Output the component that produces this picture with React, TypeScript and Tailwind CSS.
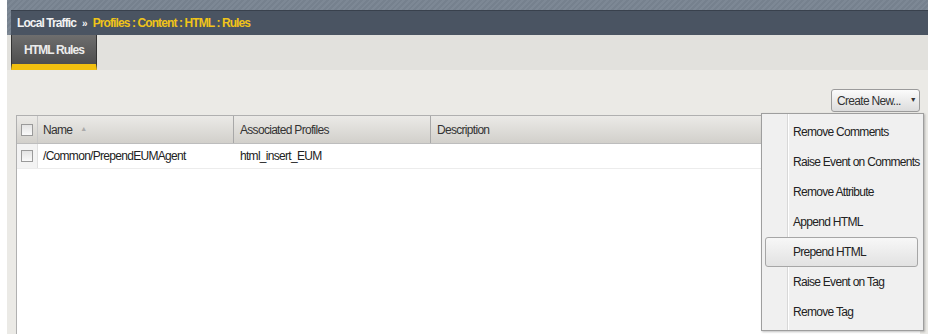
import React from "react";

const items = [
  "Remove Comments",
  "Raise Event on Comments",
  "Remove Attribute",
  "Append HTML",
  "Prepend HTML",
  "Raise Event on Tag",
  "Remove Tag",
];

function Check() {
  return <div className="w-[12px] h-[12px] border border-[#9a9a9a] bg-gradient-to-b from-[#e4e4e4] to-[#fafafa]" />;
}

export default function App() {
  return (
    <div
      className="relative w-[928px] h-[334px] overflow-hidden bg-white text-[12px] tracking-[-0.7px] text-[#222] whitespace-nowrap"
      style={{ fontFamily: '"Liberation Sans", Arial, sans-serif' }}
    >
      <div className="ml-[7px] flex flex-col h-full">
        <div className="bg-[repeating-linear-gradient(135deg,#7d8895_0px,#7d8895_2px,#76818e_2px,#76818e_4px)] pt-[10px] pl-[4px]">
          <div className="h-[25px] bg-[#4a5462] border-t border-[#39414d] flex items-center pl-[6px] font-bold tracking-[-0.9px]">
            <span className="text-[#f2f2f2]">Local Traffic</span>
            <span className="text-[#f2f2f2] mx-[6px] text-[10px]">»</span>
            <span className="text-[#f0c419]">Profiles : Content : HTML : Rules</span>
          </div>
        </div>
        <div className="h-[35px] bg-[#e2e1dd] pl-[4px] flex">
          <div className="w-[86px] h-full bg-gradient-to-b from-[#6e6e6e] to-[#4e4e4e] border-x border-[#333] border-b-[6px] border-b-[#f2c00f] flex items-start justify-center pt-[6px] text-[#ececec] font-bold tracking-[-0.9px]">
            HTML Rules
          </div>
        </div>
        <div className="flex-1 bg-[#ebeae6] pl-[9px] pr-[8px] pt-[19px] flex flex-col">
          <div className="flex justify-end">
            <div className="h-[23px] w-[89px] rounded-[3px] border border-[#9b9b9b] bg-gradient-to-b from-[#fbfbfb] to-[#dcdcdc] flex items-center justify-center gap-[9px] text-[#333] pl-[2px]">
              <span>Create New...</span>
              <span className="text-[7px]">▼</span>
            </div>
          </div>
          <div className="mt-[3px] flex-1 bg-white border-l border-[#9a9a9a] border-t border-[#b0b0b0]">
            <div className="h-[28px] flex bg-gradient-to-b from-[#ebeae7] to-[#d2d0cb] border-b border-[#bdbdbd] text-[#333]">
              <div className="w-[21px] flex items-center justify-center border-r border-[#c8c8c8]">
                <Check />
              </div>
              <div className="w-[196px] flex items-center pl-[5px] border-r border-[#a8a8a8]">
                Name <span className="ml-[8px] text-[7px] text-[#aaa]">▲</span>
              </div>
              <div className="w-[197px] flex items-center pl-[6px] border-r border-[#a8a8a8]">Associated Profiles</div>
              <div className="flex-1 flex items-center pl-[6px]">Description</div>
            </div>
            <div className="h-[25px] flex border-b border-[#ececec]">
              <div className="w-[21px] flex items-center justify-center bg-[#f3f3f3] border-r border-[#e0e0e0]">
                <Check />
              </div>
              <div className="w-[196px] flex items-center pl-[5px]">/Common/PrependEUMAgent</div>
              <div className="w-[197px] flex items-center pl-[6px]">html_insert_EUM</div>
              <div className="flex-1" />
            </div>
          </div>
        </div>
      </div>

      <div className="absolute left-[761px] top-[113px] w-[163px] h-[218px] bg-[#f0f0f0] border border-[#9e9e9e] shadow-[1px_1px_2px_rgba(0,0,0,0.25)] pt-[3px] px-[3px]">
        <div className="absolute left-[25px] top-0 bottom-0 w-px bg-[#d8d8d8]" />
        <div className="absolute left-[26px] top-0 bottom-0 w-px bg-white" />
        <div className="relative flex flex-col">
          {items.map((it) => (
            <div
              key={it}
              className={
                "h-[30px] flex items-center pl-[27px] text-[#222] " +
                (it === "Prepend HTML"
                  ? "rounded-[3px] border border-[#a6a6a6] bg-gradient-to-b from-[#f7f7f7] to-[#e2e2e2] mr-[2px]"
                  : "border border-transparent")
              }
            >
              {it}
            </div>
          ))}
        </div>
      </div>
    </div>
  );
}
